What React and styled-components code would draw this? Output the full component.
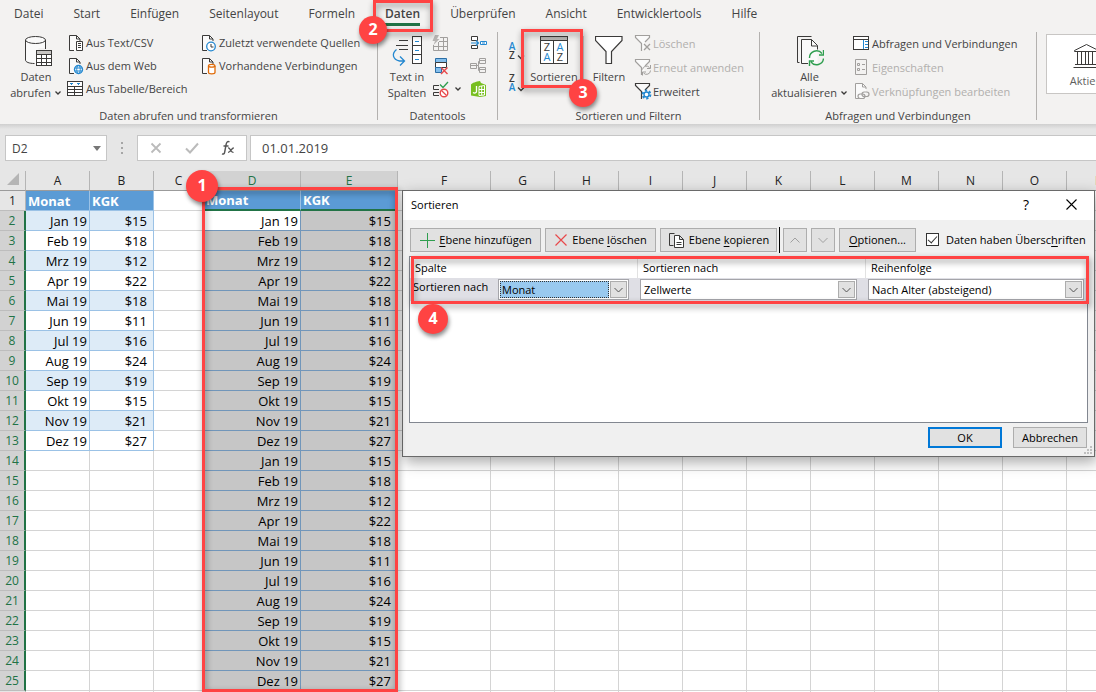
import React from "react";
import styled, { createGlobalStyle, css } from "styled-components";

const GREEN = "#217346";
const RED = "#ff4343";
const BLUE = "#2488d0";
const INK = "#3b3a39";

const GlobalStyle = createGlobalStyle`
  *, *::before, *::after { box-sizing: border-box; }
  html, body { margin: 0; }
  body, button, input, select, table {
    font-family: "Open Sans", "Noto Sans", sans-serif;
    font-size: 11px;
    color: #444;
  }
  button { margin: 0; padding: 0; border: 0; background: none; }
`;

const Page = styled.div`
  position: relative;
  display: flex;
  flex-direction: column;
  height: 100vh;
  overflow: hidden;
  background: #fff;
`;

/* ---------- Ribbon ---------- */

const TabBar = styled.nav`
  display: flex;
  flex: none;
  gap: 30px;
  height: 32px;
  padding: 4px 0 0 14px;
  background: #f3f2f1;
`;

const Tab = styled.a`
  height: 22px;
  font-size: 12px;
  line-height: 19px;
  color: #444;
  text-decoration: none;
  white-space: nowrap;
  ${(p) => p.$active && css`
    font-weight: 600;
    border-bottom: 3px solid ${GREEN};
  `}
`;

const Ribbon = styled.section`
  display: flex;
  flex: none;
  height: 92px;
  overflow: hidden;
  background: #f3f2f1;
`;

const Group = styled.div`
  display: flex;
  flex: none;
  flex-direction: column;
  width: ${(p) => p.$width}px;
`;

const GroupBody = styled.div`
  display: flex;
  height: 76px;
  padding-left: ${(p) => p.$inset}px;
`;

const GroupLabel = styled.div`
  line-height: 16px;
  text-align: center;
`;

const Divider = styled.div`
  flex: none;
  width: 1px;
  height: 88px;
  background: #b3b1af;
`;

const SplitRule = styled.div`
  flex: none;
  width: 1px;
  height: 58px;
  margin: 4px 0 0 2px;
  background: #c8c6c4;
`;

const BigButton = styled.button`
  display: flex;
  flex: none;
  flex-direction: column;
  align-items: center;
  gap: 2px;
  width: ${(p) => p.$width}px;
  padding-top: 3px;
  line-height: 16px;
  white-space: nowrap;
`;

const Stack = styled.div`
  display: flex;
  flex: none;
  flex-direction: column;
  width: ${(p) => p.$width}px;
  margin-top: -1px;
  padding-top: ${(p) => p.$top || 0}px;
`;

const SmallButton = styled.button`
  display: flex;
  flex: none;
  align-items: center;
  gap: 1px;
  height: ${(p) => p.$height || 23}px;
  white-space: nowrap;
  &:disabled { color: #b1afad; }
  svg { flex: none; }
`;

const StockCard = styled.button`
  display: flex;
  flex: none;
  flex-direction: column;
  align-items: center;
  gap: 4px;
  width: 80px;
  height: 60px;
  margin: 2px 0 0 9px;
  padding-top: 8px;
  border: 1px solid #c8c6c4;
  background: #fff;
  line-height: 16px;
  color: #605e5c;
`;

/* ---------- Formula bar ---------- */

const FormulaBar = styled.section`
  display: flex;
  flex: none;
  height: 47px;
  padding: 11px 0 0 5px;
  background: linear-gradient(#cfcfcf, #e6e6e6 5px);
`;

const NameBox = styled.label`
  display: flex;
  align-items: center;
  width: 102px;
  height: 26px;
  padding-right: 5px;
  border: 1px solid #c6c6c6;
  background: #fff;
`;

const PlainInput = styled.input`
  flex: 1;
  min-width: 0;
  padding: 0 0 0 6px;
  border: 0;
  outline: 0;
  background: transparent;
  font-size: ${(p) => p.$size}px;
`;

const DotHandle = styled.svg`
  margin: 0 14px;
`;

const FormulaActions = styled.div`
  display: flex;
  align-items: center;
  justify-content: space-around;
  width: 110px;
  height: 26px;
  margin-right: 3px;
  border: 1px solid #c6c6c6;
  background: #fff;
`;

const FormulaField = styled.label`
  display: flex;
  flex: 1;
  height: 26px;
  padding-left: 5px;
  border: 1px solid #c6c6c6;
  border-right: 0;
  background: #fff;
`;

const IconButton = styled.button`
  display: flex;
  align-items: center;
  justify-content: center;
  width: 28px;
  height: 24px;
`;

/* ---------- Sheet ---------- */

const SheetArea = styled.main`
  flex: 1;
  min-height: 0;
  overflow: hidden;
  background: #fff;
`;

const Sheet = styled.table`
  width: max-content;
  border-spacing: 0;
  table-layout: fixed;
`;

const ColHead = styled.th`
  height: 20px;
  padding: 0;
  border-right: 1px solid #b5b5b5;
  border-bottom: 1px solid #9b9b9b;
  background: ${(p) => (p.$selected ? "#d2d2d2" : "#e6e6e6")};
  color: ${(p) => (p.$selected ? GREEN : "#222")};
  font-size: 12px;
  font-weight: 400;
  line-height: 18px;
`;

const RowHead = styled.th`
  height: 20px;
  padding: 0;
  border-bottom: 1px solid #bdbdbd;
  border-right: ${(p) => (p.$selected ? `2px solid ${GREEN}` : "1px solid #b5b5b5")};
  background: ${(p) => (p.$selected ? "#d2d2d2" : "#e6e6e6")};
  color: ${(p) => (p.$selected ? GREEN : "#222")};
  font-size: 12px;
  font-weight: 400;
  line-height: 18px;
`;

const cellKinds = {
  plain: css`border-color: #d4d4d4;`,
  head: css`
    border-color: #9bc2e6;
    background: #5b9bd5;
    color: #fff;
    font-weight: 700;
    text-align: left;
  `,
  headSelected: css`
    border-color: #9bc2e6;
    border-bottom: 2px solid ${GREEN};
    background: #5b9bd5;
    color: #fff;
    font-weight: 700;
    line-height: 17px;
    text-align: left;
  `,
  band: css`border-color: #9bc2e6; background: #ddebf7;`,
  clear: css`border-color: #9bc2e6;`,
  active: css`border-color: #7196ba;`,
  selected: css`border-color: #7196ba; background: #c6c6c6;`,
};

const Cell = styled.td`
  height: 20px;
  padding: 0 ${(p) => (p.$money ? 6 : 2)}px 0 2px;
  overflow: hidden;
  border: 0 solid;
  border-width: 0 1px 1px 0;
  font-size: 13px;
  line-height: 18px;
  text-align: right;
  white-space: nowrap;
  color: #000;
  ${(p) => cellKinds[p.$kind]}
`;

/* ---------- Dialog ---------- */

const Dialog = styled.section`
  position: absolute;
  top: 190px;
  left: 402px;
  display: flex;
  flex-direction: column;
  width: 693px;
  height: 267px;
  border: 1px solid #6a6a6a;
  background: #f0f0f0;
  box-shadow: 2px 5px 14px rgba(0, 0, 0, 0.35);
  color: #000;
  button, select, label, input { color: #000; }
`;

const TitleBar = styled.header`
  display: flex;
  align-items: center;
  height: 29px;
  padding: 0 8px 2px;
  background: #fff;
`;

const Title = styled.h1`
  flex: 1;
  margin: 0;
  font-size: 11px;
  font-weight: 400;
`;

const TitleButton = styled.button`
  display: flex;
  align-items: center;
  justify-content: center;
  width: 30px;
  height: 26px;
  margin-left: 15px;
  font-size: 14px;
`;

const Toolbar = styled.div`
  display: flex;
  align-items: center;
  gap: 4px;
  height: 36px;
  padding: 3px 0 0 7px;
`;

const PushButton = styled.button`
  display: flex;
  flex: none;
  align-items: center;
  justify-content: center;
  gap: 4px;
  width: ${(p) => p.$width}px;
  height: ${(p) => p.$height || 24}px;
  border: ${(p) => (p.$primary ? "2px solid #0078d7" : "1px solid #adadad")};
  background: #e1e1e1;
  white-space: nowrap;
  u { text-underline-offset: 2px; }
`;

const ToolbarRule = styled.div`
  width: 1px;
  height: 26px;
  margin: 0 -1px 0 -2px;
  background: #000;
`;

const CheckLabel = styled.label`
  display: flex;
  align-items: center;
  gap: 7px;
  margin-left: 6px;
  white-space: nowrap;
  u { text-underline-offset: 2px; }
`;

const Check = styled.input`
  display: flex;
  justify-content: center;
  width: 13px;
  height: 13px;
  margin: 0;
  appearance: none;
  border: 1px solid #333;
  background: #fff;
  &:checked::after {
    content: "";
    width: 5px;
    height: 9px;
    border: solid #333;
    border-width: 0 1px 1px 0;
    transform: rotate(42deg);
  }
`;

const LevelList = styled.div`
  flex: 1;
  margin: 0 6px;
  border: 1px solid #828790;
  background: #fff;
`;

const LevelRow = styled.div`
  display: grid;
  grid-template-columns: 228px 228px 1fr;
  align-items: center;
  height: ${(p) => (p.$header ? 21 : 23)}px;
  background: ${(p) => (p.$header ? "#fff" : "#dfdfe5")};
`;

const LevelHead = styled.div`
  padding-left: 5px;
  border-right: 1px solid #e2e2e2;
  line-height: 21px;
  &:last-child { border-right: 0; }
`;

const LevelField = styled.div`
  display: flex;
  gap: 10px;
  padding: 0 ${(p) => (p.$last ? 3 : 9)}px 0 2px;
`;

const ComboLabel = styled.label`
  flex: none;
  width: 76px;
  padding-left: 1px;
  line-height: 16px;
  white-space: nowrap;
`;

const Combo = styled.div`
  display: flex;
  flex: 1;
  min-width: 0;
  height: 21px;
  padding: 1px;
  border: 1px solid #a5a5aa;
  background: #fff;
`;

const ComboSelect = styled.select`
  flex: 1;
  min-width: 0;
  margin-right: 1px;
  padding: 0 1px;
  appearance: none;
  border: 1px ${(p) => (p.$focused ? "dotted #333" : "solid #fff")};
  border-radius: 0;
  outline: 0;
  background: ${(p) => (p.$focused ? "#99c9ef" : "#fff")};
`;

const ComboArrow = styled.span`
  display: flex;
  flex: none;
  align-items: center;
  justify-content: center;
  width: 17px;
  border: 1px solid #adadad;
  background: #e1e1e1;
`;

const DialogFooter = styled.footer`
  display: flex;
  justify-content: flex-end;
  gap: 11px;
  height: 33px;
  padding: 4px 7px 0 0;
`;

const Grip = styled.svg`
  position: absolute;
  right: 2px;
  bottom: 2px;
`;

/* ---------- Callouts ---------- */

const Frame = styled.div`
  position: absolute;
  top: ${(p) => p.$y}px;
  left: ${(p) => p.$x}px;
  width: ${(p) => p.$w}px;
  height: ${(p) => p.$h}px;
  border: 3px solid ${RED};
  filter: drop-shadow(1px 3px 3px rgba(0, 0, 0, 0.45));
  pointer-events: none;
`;

const Badge = styled.div`
  position: absolute;
  top: ${(p) => p.$y - p.$r}px;
  left: ${(p) => p.$x - p.$r}px;
  width: ${(p) => p.$r * 2}px;
  height: ${(p) => p.$r * 2}px;
  border-radius: 50%;
  background: ${RED};
  box-shadow: 1px 3px 4px rgba(0, 0, 0, 0.45);
  color: #fff;
  font-size: 16px;
  font-weight: 700;
  line-height: ${(p) => p.$r * 2 - 2}px;
  text-align: center;
`;

/* ---------- Icons ---------- */

const Svg = ({ w, h, children, ...rest }) => (
  <svg width={w} height={h} viewBox={`0 0 ${w} ${h}`} fill="none" aria-hidden="true" {...rest}>
    {children}
  </svg>
);

const Chevron = () => (
  <Svg w={8} h={8}>
    <path d="M1.500 2.500 4 5l2.500-2.500" stroke={INK} strokeWidth="1.300" />
  </Svg>
);

const ComboChevron = () => (
  <Svg w={11} h={11}>
    <path d="m1.500 4 4 4 4-4" stroke="#555" />
  </Svg>
);

const Sheetlet = ({ color = INK }) => (
  <>
    <path d="M2.500 1.500h7l3.500 3.500v12h-10.500z" fill="#fafafa" />
    <path d="M7 16.500H2.500v-15h7l3.500 3.500v2M9.500 1.500v3.500h3.500" stroke={color} />
  </>
);

const DatabaseIcon = () => (
  <Svg w={32} h={32}>
    <path d="M5.500 5v20c0 2 4 3.500 10 3.500h3V13h7V5z" fill="#fafafa" />
    <ellipse cx="15.500" cy="5" rx="10" ry="3.500" fill="#fafafa" stroke={INK} />
    <path d="M5.500 5v20c0 2 3.500 3.500 9 3.500M25.500 5v9" stroke={INK} />
    <g shapeRendering="crispEdges">
      <path d="M16.500 15.500h15v15h-15z" fill="#fff" stroke={INK} />
      <path d="M17 16h14v3H17z" fill="#c8c6c4" />
      <path d="M16.500 19.500h15M16.500 23.500h15M16.500 27.500h15M21.500 19.500v11M26.500 19.500v11" stroke={INK} />
    </g>
  </Svg>
);

const TextFileIcon = () => (
  <Svg w={18} h={18}>
    <Sheetlet />
    <path d="M9.500 7.500h6v9h-6z" fill="#fff" stroke={INK} />
    <path d="M11 9.500h3M11 11.500h3M11 13.500h3" stroke={INK} />
  </Svg>
);

const WebFileIcon = () => (
  <Svg w={18} h={18}>
    <Sheetlet />
    <circle cx="11.500" cy="12.500" r="4" fill="#fff" stroke={BLUE} strokeWidth="1.400" />
    <ellipse cx="11.500" cy="12.500" rx="1.800" ry="4" stroke={BLUE} />
    <path d="M8 11h7M8 14h7" stroke={BLUE} />
  </Svg>
);

const TableIcon = () => (
  <Svg w={18} h={18} shapeRendering="crispEdges">
    <path d="M.5 1.500h15v14H.5z" fill="#fff" stroke={INK} />
    <path d="M2 3h4L4 5zM9 3h4l-2 2z" fill={BLUE} />
    <path d="M.5 6.500h15M.5 9.500h15M.5 12.500h15M7.500 6.500v9" stroke={INK} />
  </Svg>
);

const ClockFileIcon = () => (
  <Svg w={18} h={18}>
    <Sheetlet />
    <circle cx="11" cy="12.500" r="4.300" fill="#fff" stroke={BLUE} strokeWidth="1.300" />
    <path d="M11 10v3h2.500" stroke={INK} />
  </Svg>
);

const LinkFileIcon = () => (
  <Svg w={18} h={18}>
    <Sheetlet />
    <path d="M8.500 9v6.500c0 .8 1.500 1.300 3.200 1.300s3.300-.5 3.300-1.300V9" fill="#fff" stroke="#e06c0a" strokeWidth="1.300" />
    <ellipse cx="11.700" cy="8.700" rx="3.200" ry="1.400" fill="#fff" stroke="#e06c0a" strokeWidth="1.300" />
  </Svg>
);

const TextColumnsIcon = () => (
  <Svg w={32} h={32}>
    <path d="M8 5.500h9M5 10.500h12M8 14.500h9" stroke={INK} />
    <path d="M5.500 14.500c-5 4-4 10 3 11.500H13M9 21.500l4.500 4.500L9 30.500" stroke={BLUE} strokeWidth="1.300" />
    <g shapeRendering="crispEdges">
      <path d="M21.500 1.500h9v27h-9z" fill="#fff" stroke={INK} />
      <path d="M21.500 10.500h9M21.500 19.500h9" stroke={INK} />
      <path d="M24 6.500h4M24 15.500h4M24 24.500h4" stroke={BLUE} />
    </g>
  </Svg>
);

const FlashFillIcon = () => (
  <Svg w={18} h={18}>
    <path d="M3.500 11v5.500h14v-13H10M3.500 12.500h14M8.500 8v8.500M13.500 3.500v13M9 7.500h8.500" stroke="#a19f9d" />
    <path d="M5 1h4L7 5h2.500l-6 6L5 7H2.500z" fill="#b8b6b4" />
  </Svg>
);

const DuplicatesIcon = () => (
  <Svg w={18} h={18}>
    <path d="M5.500 1.500h11v4h-11z" fill="#83beec" stroke="#2b6ea5" />
    <path d="M5.500 5.500h11v5h-11z" fill="#fff" stroke={INK} />
    <path d="M5.500 10.500h6v5h-6z" fill="#83beec" stroke="#2b6ea5" />
    <path d="m11 10.500 6.500 6.500m0-6.500L11 17" stroke="#e8484a" strokeWidth="1.400" />
  </Svg>
);

const ValidationIcon = () => (
  <Svg w={20} h={18}>
    <path d="M9 5.500H3.500v4H9M9 12.500H3.500v3H9" stroke={INK} />
    <path d="m10 4.500 3 3L18 2" stroke="#2f9e4f" strokeWidth="1.300" />
    <circle cx="14" cy="13" r="3.800" fill="#fff" stroke="#e8484a" strokeWidth="1.400" />
    <path d="m11.500 10.500 5 5" stroke="#e8484a" strokeWidth="1.300" />
  </Svg>
);

const ConsolidateIcon = () => (
  <Svg w={18} h={18}>
    <path d="M2.500 2.500h6v4h-6zM2.500 11.500h6v3h-6z" fill="#fff" stroke={INK} />
    <path d="M2 9h7M7 6.500 9.500 9 7 11.500" stroke={BLUE} strokeWidth="1.200" />
    <path d="M11.500 7.500h6v3h-6z" fill="#fff" stroke={BLUE} />
    <path d="M13 9h3" stroke={BLUE} />
  </Svg>
);

const RelationsIcon = () => (
  <Svg w={18} h={18} stroke="#a19f9d">
    <path d="M1.500 6.500h6v5h-6zM10.500 1.500h6v5h-6zM10.500 10.500h6v5h-6z" />
    <path d="M1.500 8.500h6M10.500 3.500h6M10.500 12.500h6M7.500 8.500h2v-4h1M9.500 8.500v5h1" />
  </Svg>
);

const DataModelIcon = () => (
  <Svg w={18} h={18}>
    <path d="M2 4.500C3 3 7 1.500 11 1l1 2 5 2v11l-6 1-9-1.500z" fill="#78be20" />
    <path d="M7.500 6v5.500c0 1.500-2 2-3.500 1" stroke="#fff" strokeWidth="1.300" />
    <path d="m10 6.500 5.500-1v9.500l-5.500.5zM10 9.500h5.500M10 12.500h5.500M12.700 6v9" stroke="#fff" />
  </Svg>
);

const Letter = ({ x, y, blue, children }) => (
  <text x={x} y={y} fontSize="10" fontWeight="600" textAnchor="middle" fill={blue ? BLUE : INK}>
    {children}
  </text>
);

const SortIcon = ({ reverse }) => (
  <Svg w={19} h={24}>
    <Letter x={5} y={12} blue={!reverse}>{reverse ? "Z" : "A"}</Letter>
    <Letter x={5} y={21} blue={reverse}>{reverse ? "A" : "Z"}</Letter>
    <path d="m11 17.500 3 3 3-3" stroke={INK} strokeWidth="1.300" />
  </Svg>
);

const SortDialogIcon = () => (
  <Svg w={28} h={32}>
    <g shapeRendering="crispEdges">
      <path d="M.5 1.500h27v27H.5z" fill="#fff" stroke={INK} />
      <path d="M1 2h26v3H1z" fill="#b8b6b4" />
      <path d="M.5 5.500h27M13.500 5.500v23" stroke={INK} />
    </g>
    <g fontSize="11" textAnchor="middle">
      <text x="7" y="16" fill={INK}>Z</text>
      <text x="7" y="26" fill={BLUE}>A</text>
      <text x="20" y="16" fill={BLUE}>A</text>
      <text x="20" y="26" fill={INK}>Z</text>
    </g>
  </Svg>
);

const FunnelIcon = () => (
  <Svg w={28} h={32}>
    <path d="M.5 1.500h26.500v4L16.500 16.500v12h-5.500v-12L.5 5.500z" fill="#fff" stroke={INK} strokeWidth="1.200" />
  </Svg>
);

const SmallFunnel = ({ color, children }) => (
  <Svg w={18} h={18}>
    <path d="M1 1.500h15v2l-5.500 5.500v6l-3 2V9L1 3.500z" fill="#fafafa" />
    <path d="M7.500 17V9.500L1.500 3.500v-2h14v2L11 8" stroke={color} strokeWidth="1.200" />
    {children}
  </Svg>
);

const ClearFilterIcon = () => (
  <SmallFunnel color="#a19f9d">
    <path d="m10 10 6 6m0-6-6 6" stroke="#a19f9d" strokeWidth="1.300" />
  </SmallFunnel>
);

const ReapplyIcon = () => (
  <SmallFunnel color="#a19f9d">
    <path d="M8.500 11.500a4 4 0 0 1 7-2M16.500 7v3.500H13M16.500 12.500a4 4 0 0 1-7 2.500M8.500 17.500V14H12" stroke="#a19f9d" />
  </SmallFunnel>
);

const AdvancedIcon = () => (
  <SmallFunnel color={INK}>
    <circle cx="12.500" cy="12.500" r="3.900" stroke={BLUE} strokeWidth="2" strokeDasharray="2.200 1.880" />
    <circle cx="12.500" cy="12.500" r="2.500" fill="#fff" stroke={BLUE} strokeWidth="1.400" />
  </SmallFunnel>
);

const RefreshAllIcon = () => (
  <Svg w={28} h={32}>
    <path d="M4.500 4.500h11l6 6V28H4.500z" fill="#fafafa" />
    <path d="M3.500 27.500h-2v-26h14M12 28.500H5.500v-24h10l6 6v4M15.500 4.500v6.500h6" stroke={INK} />
    <path d="M13.500 23a7 7 0 0 1 12.500-4.500M27.500 15v5H23M27.500 23.500A7 7 0 0 1 15 27M13.500 31v-5H18" stroke="#2f9e4f" strokeWidth="1.400" />
  </Svg>
);

const QueriesIcon = () => (
  <Svg w={18} h={18} shapeRendering="crispEdges">
    <path d="M.5 2.500h15v13H.5z" fill="#fff" stroke={INK} />
    <path d="M.5 5.500h15" stroke={INK} />
    <path d="M10.500 6v9M12 7.500h3M12 10.500h3M12 13.500h3" stroke={BLUE} />
  </Svg>
);

const PropertiesIcon = () => (
  <Svg w={18} h={18} stroke="#a19f9d">
    <path d="M2.500 1.500h11v15h-11zM4.500 5.500h2v2h-2zM4.500 10.500h2v2h-2zM9 6.500h3M9 11.500h3" />
  </Svg>
);

const EditLinksIcon = () => (
  <Svg w={18} h={18}>
    <Sheetlet color="#a19f9d" />
    <g stroke="#a19f9d" strokeWidth="1.200" fill="#fafafa">
      <rect x="5" y="12" width="7" height="4.500" rx="2.200" />
      <rect x="9" y="10" width="7" height="4.500" rx="2.200" fill="none" />
    </g>
  </Svg>
);

const BankIcon = () => (
  <Svg w={27} h={26} stroke={INK}>
    <path d="M1.500 8.500v-1L13.500 1.500l12 6v1zM2 21.500h23M.5 24.500h26" />
    <path d="M4.500 9v12M8.500 9v12M12.500 9v12M15.500 9v12M19.500 9v12M23.500 9v12" />
  </Svg>
);

const PlusIcon = () => (
  <Svg w={16} h={16}><path d="M8.500 1v15M1 8.500h15" stroke="#2f9e4f" /></Svg>
);

const CrossIcon = ({ color = "#e8484a", size = 14, width = 1.2 }) => (
  <Svg w={size} h={size}>
    <path d={`m1.500 1.500 ${size - 3} ${size - 3}m0-${size - 3}-${size - 3} ${size - 3}`} stroke={color} strokeWidth={width} />
  </Svg>
);

const CopyIcon = () => (
  <Svg w={17} h={16}>
    <path d="M5.500 13.500h-4v-12h5" stroke={INK} />
    <path d="M6.500 3.500h5l4 4v8h-9zM11.500 3.500v4h4M8.500 10.500h5M8.500 12.500h5" fill="#fff" stroke={INK} />
  </Svg>
);

/* ---------- Data ---------- */

const TABS = ["Datei", "Start", "Einfügen", "Seitenlayout", "Formeln", "Daten", "Überprüfen", "Ansicht", "Entwicklertools", "Hilfe"];

const YEAR = [
  ["Jan 19", "$15"], ["Feb 19", "$18"], ["Mrz 19", "$12"], ["Apr 19", "$22"],
  ["Mai 19", "$18"], ["Jun 19", "$11"], ["Jul 19", "$16"], ["Aug 19", "$24"],
  ["Sep 19", "$19"], ["Okt 19", "$15"], ["Nov 19", "$21"], ["Dez 19", "$27"],
];

const COLUMNS = "ABCDEFGHIJKLMNOP".split("");
const WIDTHS = { C: 50, D: 97, E: 97, F: 93 };
const ROWS = Array.from({ length: 26 }, (_, i) => i + 1);

function cellFor(col, row) {
  const source = "AB".includes(col);
  const target = "DE".includes(col);
  const last = source ? 13 : 25;
  if ((!source && !target) || row > last) return { kind: "plain" };
  const field = col === "A" || col === "D" ? 0 : 1;
  if (row === 1) return { kind: target ? "headSelected" : "head", text: ["Monat", "KGK"][field] };
  const text = YEAR[(row - 2) % 12][field];
  const money = field === 1;
  if (target) return { kind: col === "D" && row === 2 ? "active" : "selected", text, money };
  return { kind: row % 2 === 0 ? "band" : "clear", text, money };
}

const Level = ({ id, label, name, value, focused, last }) => (
  <LevelField $last={last}>
    {label && <ComboLabel htmlFor={id}>{label}</ComboLabel>}
    <Combo>
      <ComboSelect id={id} $focused={focused} defaultValue={value} aria-label={name}>
        <option>{value}</option>
      </ComboSelect>
      <ComboArrow><ComboChevron /></ComboArrow>
    </Combo>
  </LevelField>
);

function SortDialog() {
  return (
    <Dialog role="dialog" aria-label="Sortieren">
      <TitleBar>
        <Title>Sortieren</Title>
        <TitleButton aria-label="Hilfe">?</TitleButton>
        <TitleButton aria-label="Schließen"><CrossIcon color="#000" size={13} width={1.1} /></TitleButton>
      </TitleBar>
      <Toolbar>
        <PushButton $width={131}><PlusIcon /><span><u>E</u>bene hinzufügen</span></PushButton>
        <PushButton $width={111}><CrossIcon /><span>Ebene <u>l</u>öschen</span></PushButton>
        <PushButton $width={117}><CopyIcon /><span>Ebene <u>k</u>opieren</span></PushButton>
        <ToolbarRule />
        <PushButton $width={24} aria-label="Nach oben">
          <Svg w={12} h={12}><path d="m1.500 8.500 4.500-4.500 4.500 4.500" stroke="#a0a0a0" /></Svg>
        </PushButton>
        <PushButton $width={24} aria-label="Nach unten">
          <Svg w={12} h={12}><path d="m1.500 4 4.500 4.500L10.500 4" stroke="#a0a0a0" /></Svg>
        </PushButton>
        <PushButton $width={77}><span><u>O</u>ptionen...</span></PushButton>
        <CheckLabel>
          <Check type="checkbox" defaultChecked />
          <span>Daten haben Übersc<u>h</u>riften</span>
        </CheckLabel>
      </Toolbar>
      <LevelList>
        <LevelRow $header>
          <LevelHead>Spalte</LevelHead>
          <LevelHead>Sortieren nach</LevelHead>
          <LevelHead>Reihenfolge</LevelHead>
        </LevelRow>
        <LevelRow>
          <Level id="sort-column" label="Sortieren nach" value="Monat" focused />
          <Level id="sort-on" name="Sortieren nach" value="Zellwerte" />
          <Level id="sort-order" name="Reihenfolge" value="Nach Alter (absteigend)" last />
        </LevelRow>
      </LevelList>
      <DialogFooter>
        <PushButton $width={74} $height={21} $primary>OK</PushButton>
        <PushButton $width={74} $height={21}>Abbrechen</PushButton>
      </DialogFooter>
      <Grip width="8" height="8" viewBox="0 0 8 8" fill="#bfbfbf" aria-hidden="true">
        <path d="M6 0h2v2H6zM3 3h2v2H3zM6 3h2v2H6zM0 6h2v2H0zM3 6h2v2H3zM6 6h2v2H6z" />
      </Grip>
    </Dialog>
  );
}

export default function App() {
  return (
    <Page>
      <GlobalStyle />
      <TabBar>
        {TABS.map((name) => (
          <Tab key={name} href="#" $active={name === "Daten"}>{name}</Tab>
        ))}
      </TabBar>

      <Ribbon>
        <Group $width={377}>
          <GroupBody $inset={5}>
            <BigButton $width={62}>
              <DatabaseIcon />
              <span>Daten<br />abrufen <Chevron /></span>
            </BigButton>
            <Stack $width={133}>
              <SmallButton><TextFileIcon />Aus Text/CSV</SmallButton>
              <SmallButton><WebFileIcon />Aus dem Web</SmallButton>
              <SmallButton><TableIcon />Aus Tabelle/Bereich</SmallButton>
            </Stack>
            <Stack $width={170}>
              <SmallButton><ClockFileIcon />Zuletzt verwendete Quellen</SmallButton>
              <SmallButton><LinkFileIcon />Vorhandene Verbindungen</SmallButton>
            </Stack>
          </GroupBody>
          <GroupLabel>Daten abrufen und transformieren</GroupLabel>
        </Group>
        <Divider />
        <Group $width={119}>
          <GroupBody $inset={6}>
            <BigButton $width={46}>
              <TextColumnsIcon />
              <span>Text in<br />Spalten</span>
            </BigButton>
            <Stack $width={39}>
              <SmallButton aria-label="Blitzvorschau"><FlashFillIcon /></SmallButton>
              <SmallButton aria-label="Duplikate entfernen"><DuplicatesIcon /></SmallButton>
              <SmallButton aria-label="Datenüberprüfung"><ValidationIcon /><Svg w={2} h={8} /><Chevron /></SmallButton>
            </Stack>
            <Stack $width={18}>
              <SmallButton aria-label="Konsolidieren"><ConsolidateIcon /></SmallButton>
              <SmallButton aria-label="Beziehungen"><RelationsIcon /></SmallButton>
              <SmallButton aria-label="Datenmodell verwalten"><DataModelIcon /></SmallButton>
            </Stack>
          </GroupBody>
          <GroupLabel>Datentools</GroupLabel>
        </Group>
        <Divider />
        <Group $width={261}>
          <GroupBody $inset={9}>
            <Stack $width={20} $top={3}>
              <SmallButton $height={32} aria-label="Aufsteigend sortieren"><SortIcon /></SmallButton>
              <SmallButton $height={32} aria-label="Absteigend sortieren"><SortIcon reverse /></SmallButton>
            </Stack>
            <BigButton $width={54}><SortDialogIcon /><span>Sortieren</span></BigButton>
            <SplitRule />
            <BigButton $width={50}><FunnelIcon /><span>Filtern</span></BigButton>
            <Stack $width={120}>
              <SmallButton $height={24} disabled><ClearFilterIcon />Löschen</SmallButton>
              <SmallButton $height={24} disabled><ReapplyIcon />Erneut anwenden</SmallButton>
              <SmallButton $height={24}><AdvancedIcon />Erweitert</SmallButton>
            </Stack>
          </GroupBody>
          <GroupLabel>Sortieren und Filtern</GroupLabel>
        </Group>
        <Divider />
        <Group $width={276}>
          <GroupBody $inset={6}>
            <BigButton $width={87}>
              <RefreshAllIcon />
              <span>Alle<br />aktualisieren <Chevron /></span>
            </BigButton>
            <Stack $width={170}>
              <SmallButton $height={24}><QueriesIcon />Abfragen und Verbindungen</SmallButton>
              <SmallButton $height={24} disabled><PropertiesIcon />Eigenschaften</SmallButton>
              <SmallButton $height={24} disabled><EditLinksIcon />Verknüpfungen bearbeiten</SmallButton>
            </Stack>
          </GroupBody>
          <GroupLabel>Abfragen und Verbindungen</GroupLabel>
        </Group>
        <Divider />
        <StockCard><BankIcon />Aktien</StockCard>
      </Ribbon>

      <FormulaBar>
        <NameBox>
          <PlainInput $size={12} defaultValue="D2" aria-label="Namenfeld" />
          <Svg w={8} h={5}><path d="M0 0h8L4 5z" fill="#777" /></Svg>
        </NameBox>
        <DotHandle width="2" height="26" viewBox="0 0 2 26" fill="#a6a6a6" aria-hidden="true">
          <path d="M0 7h2v2H0zM0 12h2v2H0zM0 17h2v2H0z" />
        </DotHandle>
        <FormulaActions>
          <IconButton aria-label="Abbrechen"><CrossIcon color="#bbb" size={12} width={1.8} /></IconButton>
          <IconButton aria-label="Eingeben">
            <Svg w={14} h={12}><path d="m1 6.500 4 4 8-9" stroke="#bbb" strokeWidth="2" /></Svg>
          </IconButton>
          <IconButton aria-label="Funktion einfügen">
            <Svg w={14} h={16}>
              <path d="M8.500 2c-2-1.200-3 .3-3.400 2.500L3.700 12c-.3 1.800-1.300 2.500-2.700 1.800M2.500 6h5" stroke="#555" strokeWidth="1.400" />
              <path d="M7 8c2.500-.6 2.500 5 5.500 4.300M12.800 8C10.500 7.800 9.500 12.500 7 12.300" stroke="#555" strokeWidth="1.300" />
            </Svg>
          </IconButton>
        </FormulaActions>
        <FormulaField>
          <PlainInput $size={13} defaultValue="01.01.2019" aria-label="Bearbeitungsleiste" />
        </FormulaField>
      </FormulaBar>

      <SheetArea>
        <Sheet>
          <colgroup>
            <col width={26} />
            {COLUMNS.map((c) => <col key={c} width={WIDTHS[c] || 64} />)}
          </colgroup>
          <thead>
            <tr>
              <ColHead aria-label="Alles auswählen">
                <Svg w={13} h={13}><path d="M13 1v12H1z" fill="#b5b5b5" /></Svg>
              </ColHead>
              {COLUMNS.map((c) => <ColHead key={c} scope="col" $selected={"DE".includes(c)}>{c}</ColHead>)}
            </tr>
          </thead>
          <tbody>
            {ROWS.map((r) => (
              <tr key={r}>
                <RowHead scope="row" $selected={r > 1 && r < 26}>{r}</RowHead>
                {COLUMNS.map((c) => {
                  const { kind, text, money } = cellFor(c, r);
                  return <Cell key={c} $kind={kind} $money={money}>{text}</Cell>;
                })}
              </tr>
            ))}
          </tbody>
        </Sheet>
      </SheetArea>

      <SortDialog />

      <Frame $x={202} $y={187} $w={196} $h={505} />
      <Frame $x={373} $y={0} $w={60} $h={32} />
      <Frame $x={521} $y={29} $w={62} $h={59} />
      <Frame $x={411} $y={256} $w={678} $h={48} />
      <Badge $x={202} $y={186} $r={16}>1</Badge>
      <Badge $x={373} $y={30} $r={14}>2</Badge>
      <Badge $x={583} $y={93} $r={14}>3</Badge>
      <Badge $x={433} $y={319} $r={15}>4</Badge>
    </Page>
  );
}
